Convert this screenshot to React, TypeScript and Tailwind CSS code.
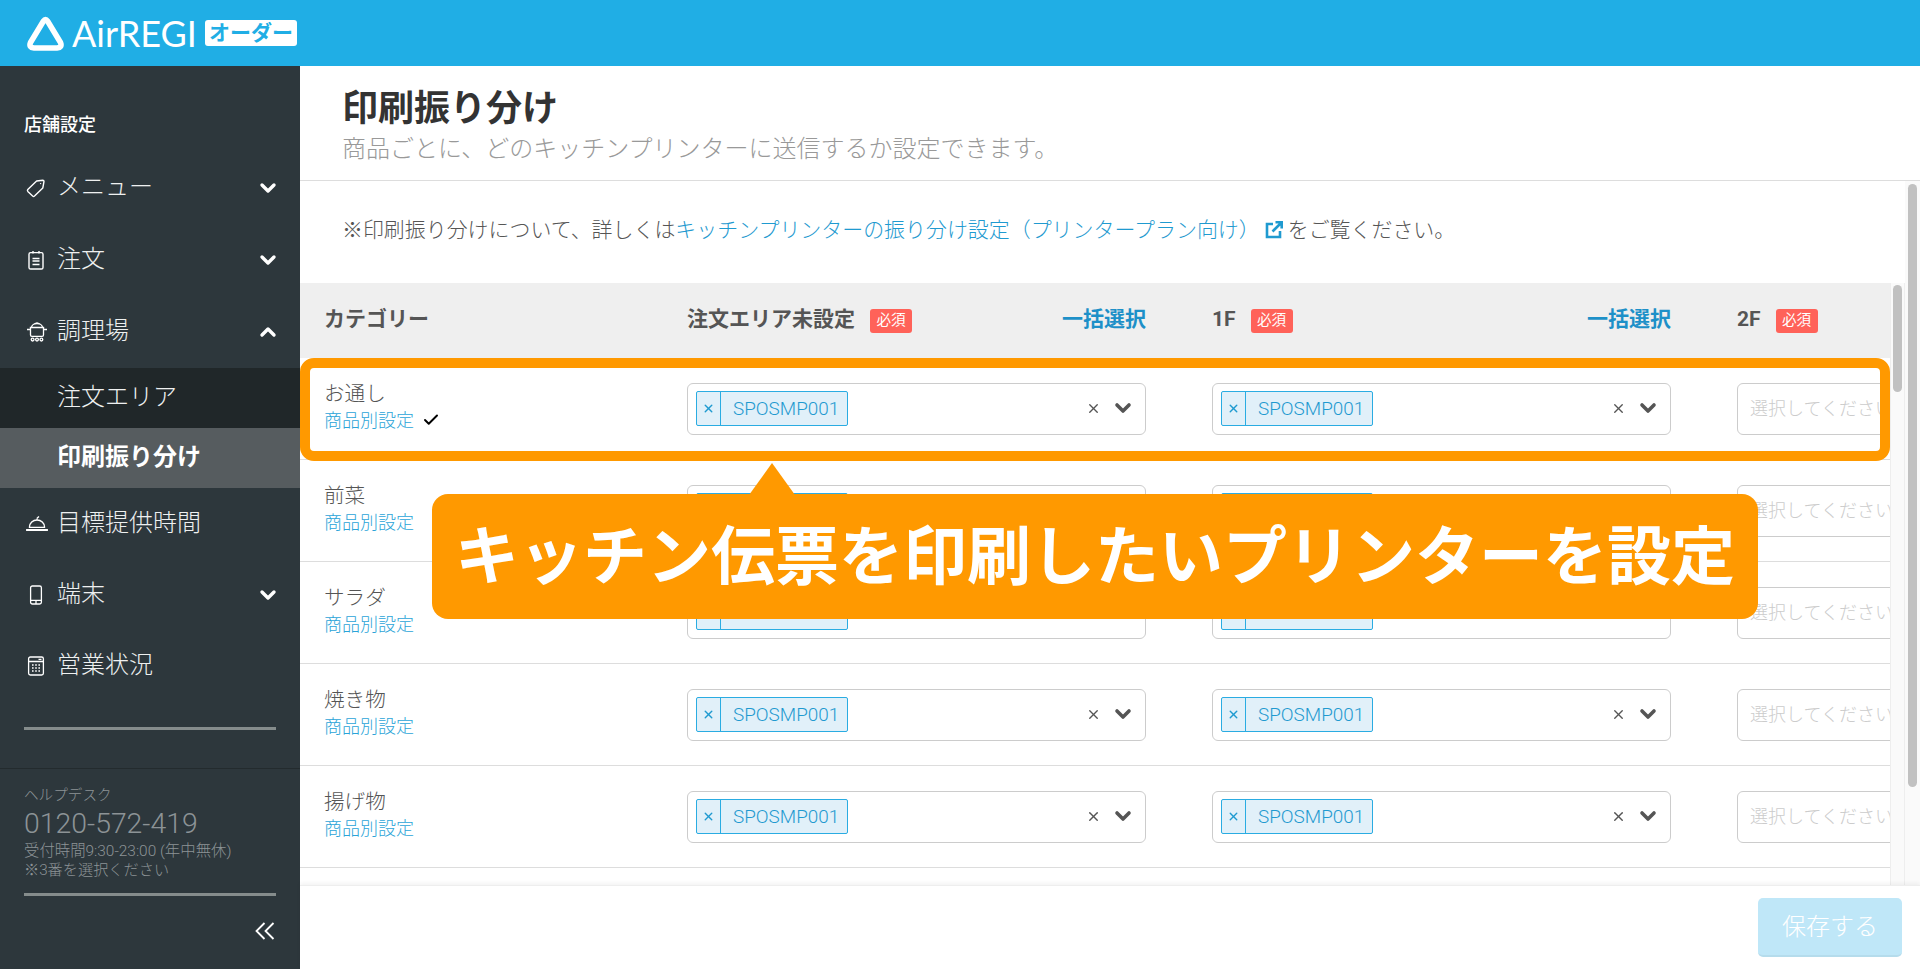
import { ChevronDown, ChevronUp, Check, X } from "lucide-react"
import type React from "react"

const jp = "font-['Roboto','Noto_Sans_CJK_JP',sans-serif]"

function LogoMark() {
  return (
    <svg width="39" height="37" viewBox="0 0 39 37" fill="none" className="shrink-0">
      <path d="M19.5 4.5 Q20.5 4.5 21.5 6 L34.5 27.5 Q36.5 32.5 31 33 L8 33 Q2.5 32.5 4.5 27.5 L17.5 6 Q18.5 4.5 19.5 4.5 Z" stroke="white" strokeWidth="5.6" strokeLinejoin="round" />
    </svg>
  )
}

function TagIcon() {
  return (
    <svg width="20" height="20" viewBox="0 0 20 20" fill="none" stroke="white" strokeWidth="1.4" strokeLinejoin="round">
      <path d="M1.8 11.5 Q1 12.4 1.8 13.4 L6.6 18 Q7.6 18.8 8.5 18 L16.8 10 L18 3.4 Q18 2.2 16.8 2.2 L10.6 3 Z" />
      <circle cx="14.6" cy="5.6" r="0.7" fill="white" stroke="none" />
    </svg>
  )
}

function ClipboardIcon() {
  return (
    <svg width="20" height="20" viewBox="0 0 20 20" fill="none" stroke="white" strokeWidth="1.4">
      <rect x="3" y="2.6" width="14" height="16.4" rx="1.6" />
      <path d="M7 1v2.6M13 1v2.6M6.5 8.5h7M6.5 11h7M6.5 14.5h7" />
    </svg>
  )
}

function PotIcon() {
  return (
    <svg width="22" height="22" viewBox="0 0 22 22" fill="none" stroke="white" strokeWidth="1.3">
      <path d="M1 8.5h3M18 8.5h3M3.8 6.5h14.4M4.5 6.5v7.5a1.4 1.4 0 0 0 1.4 1.4h10.2a1.4 1.4 0 0 0 1.4-1.4V6.5" />
      <path d="M5.5 6.5a5.5 4 0 0 1 11 0M9.6 2.4q1.4-1 2.8 0" />
      <circle cx="6.6" cy="18.6" r="1.4" />
      <circle cx="11" cy="18.6" r="1.4" />
      <circle cx="15.4" cy="18.6" r="1.4" />
    </svg>
  )
}

function BellIcon() {
  return (
    <svg width="22" height="18" viewBox="0 0 22 18" fill="none" stroke="white" strokeWidth="1.4">
      <path d="M3.5 12a7.5 7 0 0 1 15 0v.4h-15zM11 5V3.4M11 3.2l2-1.8" />
      <path d="M.6 15h20.8" strokeWidth="1.8" strokeLinecap="round" />
    </svg>
  )
}

function DeviceIcon() {
  return (
    <svg width="20" height="20" viewBox="0 0 20 20" fill="none" stroke="white" strokeWidth="1.3">
      <rect x="4.6" y="1" width="10.8" height="18" rx="1.8" />
      <path d="M4.6 15.4h10.8M10 15.4v3.6" />
    </svg>
  )
}

function CalcIcon() {
  return (
    <svg width="20" height="20" viewBox="0 0 20 20" fill="none" stroke="white" strokeWidth="1.3">
      <rect x="2.6" y="1" width="14.8" height="18" rx="1.8" />
      <path d="M2.6 5.5h14.8M12.5 3.3h3" />
      <path d="M6 9h1.6M9.2 9h1.6M12.4 9h1.6M6 12h1.6M9.2 12h1.6M12.4 12h1.6M6 15h1.6M9.2 15h1.6M12.4 15h1.6" strokeWidth="1.6" />
    </svg>
  )
}

function ExternalIcon() {
  return (
    <svg width="18" height="18" viewBox="0 0 18 18" fill="none" stroke="#1f9ad0" strokeWidth="2.6" className="mx-[5px] mb-[3px] shrink-0">
      <path d="M8 3H2v13h13v-6" />
      <path d="M7.5 10.5 16 2M10.5 1.3h6.2v6.2" />
    </svg>
  )
}

function MenuItem({ icon, label, open, closed, h = "h-[72px]" }: { icon: React.ReactNode; label: string; open?: boolean; closed?: boolean; h?: string }) {
  return (
    <div className={`flex items-center ${h} pl-[26px] pr-[20px] text-[24px] text-[#eef0f0] font-light`}>
      <div className="w-[31px] flex items-center">{icon}</div>
      <span className="flex-1 pb-[2px]">{label}</span>
      {closed && <ChevronDown size={24} strokeWidth={3.4} className="text-white" />}
      {open && <ChevronUp size={24} strokeWidth={3.4} className="text-white" />}
    </div>
  )
}

function Sidebar() {
  return (
    <aside className="w-[300px] shrink-0 bg-[#2d373c] flex flex-col">
      <div className="pl-[24px] pt-[47px] pb-[15px] text-[18px] leading-[24px] font-medium text-white">店舗設定</div>
      <MenuItem icon={<TagIcon />} label="メニュー" closed />
      <MenuItem icon={<ClipboardIcon />} label="注文" closed />
      <MenuItem icon={<PotIcon />} label="調理場" open />
      <div className="h-[60px] bg-[#202729] flex items-center pl-[57px] pb-[2px] text-[24px] font-light text-[#eef0f0]">注文エリア</div>
      <div className="h-[60px] bg-[#565c5f] flex items-center pl-[57px] pb-[2px] text-[24px] font-bold text-white">印刷振り分け</div>
      <MenuItem icon={<BellIcon />} label="目標提供時間" h="h-[71px]" />
      <MenuItem icon={<DeviceIcon />} label="端末" closed />
      <MenuItem icon={<CalcIcon />} label="営業状況" h="h-[70px]" />
      <div className="mx-[24px] mt-[26px] h-[3px] bg-[#858c8c]" />
      <div className="mt-[38px] border-t border-[#232b2e] pt-[16px] px-[24px] text-[#8c9396]">
        <div className="text-[14.6px] leading-[21px] font-light">ヘルプデスク</div>
        <div className="text-[28.4px] leading-[35px] font-light">0120-572-419</div>
        <div className="text-[15.4px] leading-[20px] font-light">受付時間9:30-23:00 (年中無休)</div>
        <div className="text-[15.2px] leading-[19px] font-light">※3番を選択ください</div>
      </div>
      <div className="mx-[24px] mt-[13px] h-[3px] bg-[#858c8c]" />
      <div className="flex justify-end pr-[25px] pt-[25px]">
        <svg width="20" height="20" viewBox="0 0 20 20" fill="none" stroke="white" strokeWidth="1.8">
          <path d="M9.5 2 1.5 10l8 8M18.5 2l-8 8 8 8" />
        </svg>
      </div>
    </aside>
  )
}

function HeaderCell({ label, bulk }: { label: string; bulk?: boolean }) {
  return (
    <div className="w-[459px] shrink-0 mr-[66px] flex items-center">
      <span className="text-[21px] font-bold text-[#555] mb-[2px]">{label}</span>
      <span className="ml-[15px] w-[42px] h-[24px] rounded-[3px] bg-[#ff6259] text-white text-[14.6px] flex items-center justify-center">必須</span>
      {bulk && <span className="ml-auto mb-[2px] text-[21px] font-bold text-[#1d90c8]">一括選択</span>}
    </div>
  )
}

function PrinterSelect() {
  return (
    <div className="w-[459px] h-[52px] shrink-0 mr-[66px] rounded-[6px] border border-[#ccc] bg-white flex items-center pl-[8px]">
      <div className="h-[35px] w-[152px] flex border border-[#2aace2] rounded-[2px] bg-[#e1f0f9] text-[#1f9ad0]">
        <span className="w-[24px] shrink-0 border-r border-[#2aace2] flex items-center justify-center">
          <X size={13} strokeWidth={2.6} />
        </span>
        <span className="pl-[12px] text-[18.9px] font-light leading-[33px] whitespace-nowrap">SPOSMP001</span>
      </div>
      <X size={15} strokeWidth={2.2} className="ml-auto text-[#555]" />
      <ChevronDown size={24} strokeWidth={3.6} className="ml-[10px] mr-[10px] mb-[2px] text-[#555]" />
    </div>
  )
}

function EmptySelect() {
  return (
    <div className="w-[459px] h-[52px] shrink-0 rounded-[6px] border border-[#ccc] bg-white flex items-center pl-[12px] text-[18px] font-light text-[#ccc]">
      選択してください
    </div>
  )
}

function Row({ name, check }: { name: string; check?: boolean }) {
  return (
    <div className="h-[102px] shrink-0 flex items-center border-b border-[#ddd] pl-[24px]">
      <div className="w-[363px] shrink-0 pb-[4px]">
        <div className="text-[20.6px] leading-[27px] font-light text-[#555]">{name}</div>
        <div className="flex items-center text-[18px] leading-[25px] font-light text-[#2ba4d8]">
          商品別設定
          {check && <Check size={18} strokeWidth={2.6} className="ml-[8px] text-black" />}
        </div>
      </div>
      <PrinterSelect />
      <PrinterSelect />
      <EmptySelect />
    </div>
  )
}

export default function App() {
  const rows = ["前菜", "サラダ", "焼き物", "揚げ物"]
  return (
    <div className={`h-[969px] w-[1920px] flex flex-col overflow-hidden relative bg-white ${jp}`}>
      <header className="h-[66px] shrink-0 bg-[#20aee5] flex items-center pl-[26px]">
        <LogoMark />
        <span className="ml-[7px] text-[36px] font-['Lato',sans-serif] font-normal text-white">AirREGI</span>
        <span className="ml-[8px] w-[92px] h-[26px] rounded-[3px] bg-white text-[#20aee5] text-[21px] leading-none font-bold flex items-center justify-center">オーダー</span>
      </header>
      <div className="flex-1 flex min-h-0">
        <Sidebar />
        <main className="flex-1 flex flex-col min-w-0 relative">
          <div className="h-[115px] shrink-0 border-b border-[#ddd] pl-[42px] pt-[21px]">
            <h1 className="text-[36px] leading-[44px] font-bold text-[#333] mb-[3px]">印刷振り分け</h1>
            <p className="text-[24px] leading-[30px] font-light text-[#999]">商品ごとに、どのキッチンプリンターに送信するか設定できます。</p>
          </div>
          <div className="flex-1 min-h-0 overflow-hidden relative">
            <div className="h-[102px] pl-[42px] pb-[2px] flex items-center text-[20.95px] font-light text-[#555]">
              ※印刷振り分けについて、詳しくは
              <span className="text-[#1f9ad0]">キッチンプリンターの振り分け設定（プリンタープラン向け）</span>
              <ExternalIcon />
              をご覧ください。
            </div>
            <div className="w-[1590px] overflow-hidden">
              <div className="h-[75px] bg-[#efefef] flex items-center pl-[24px]">
                <span className="w-[363px] shrink-0 text-[21px] font-bold text-[#555] mb-[2px]">カテゴリー</span>
                <HeaderCell label="注文エリア未設定" bulk />
                <HeaderCell label="1F" bulk />
                <HeaderCell label="2F" />
              </div>
              <Row name="お通し" check />
              {rows.map((r) => (
                <Row key={r} name={r} />
              ))}
            </div>
            {/* scrollbars */}
            <div className="absolute right-[15px] top-[102px] bottom-0 w-[15px] bg-[#fafafa] border-x border-[#eee]">
              <div className="mx-auto mt-[2px] w-[9px] h-[107px] rounded-full bg-[#c1c1c1]" />
            </div>
            <div className="absolute right-0 top-0 bottom-0 w-[15px] bg-[#fafafa]">
              <div className="mx-auto mt-[3px] w-[9px] h-[603px] rounded-full bg-[#c1c1c1]" />
            </div>
          </div>
          <div className="h-[84px] shrink-0 border-t border-[#eee] shadow-[0_-2px_4px_rgba(0,0,0,0.05)] flex items-center justify-end pr-[18px] relative">
            <button className="w-[144px] h-[59px] rounded-[5px] bg-[#bfe7f8] border-b-[2px] border-[#b5dcec] text-white text-[24px] font-light">保存する</button>
          </div>
        </main>
      </div>

      {/* annotation overlay */}
      <div className="absolute left-[300px] top-[358px] w-[1590px] h-[103px] border-[10px] border-[#ff9900] rounded-[14px]" />
      <div className="absolute left-[749px] top-[463px] w-0 h-0 border-x-[23px] border-x-transparent border-b-[32px] border-b-[#ff9900]" />
      <div className="absolute left-[432px] top-[494px] w-[1326px] h-[125px] pt-[3px] rounded-[16px] bg-[#ff9900] flex items-center justify-center text-white text-[64px] font-bold whitespace-nowrap">
        キッチン伝票を印刷したいプリンターを設定
      </div>
    </div>
  )
}
